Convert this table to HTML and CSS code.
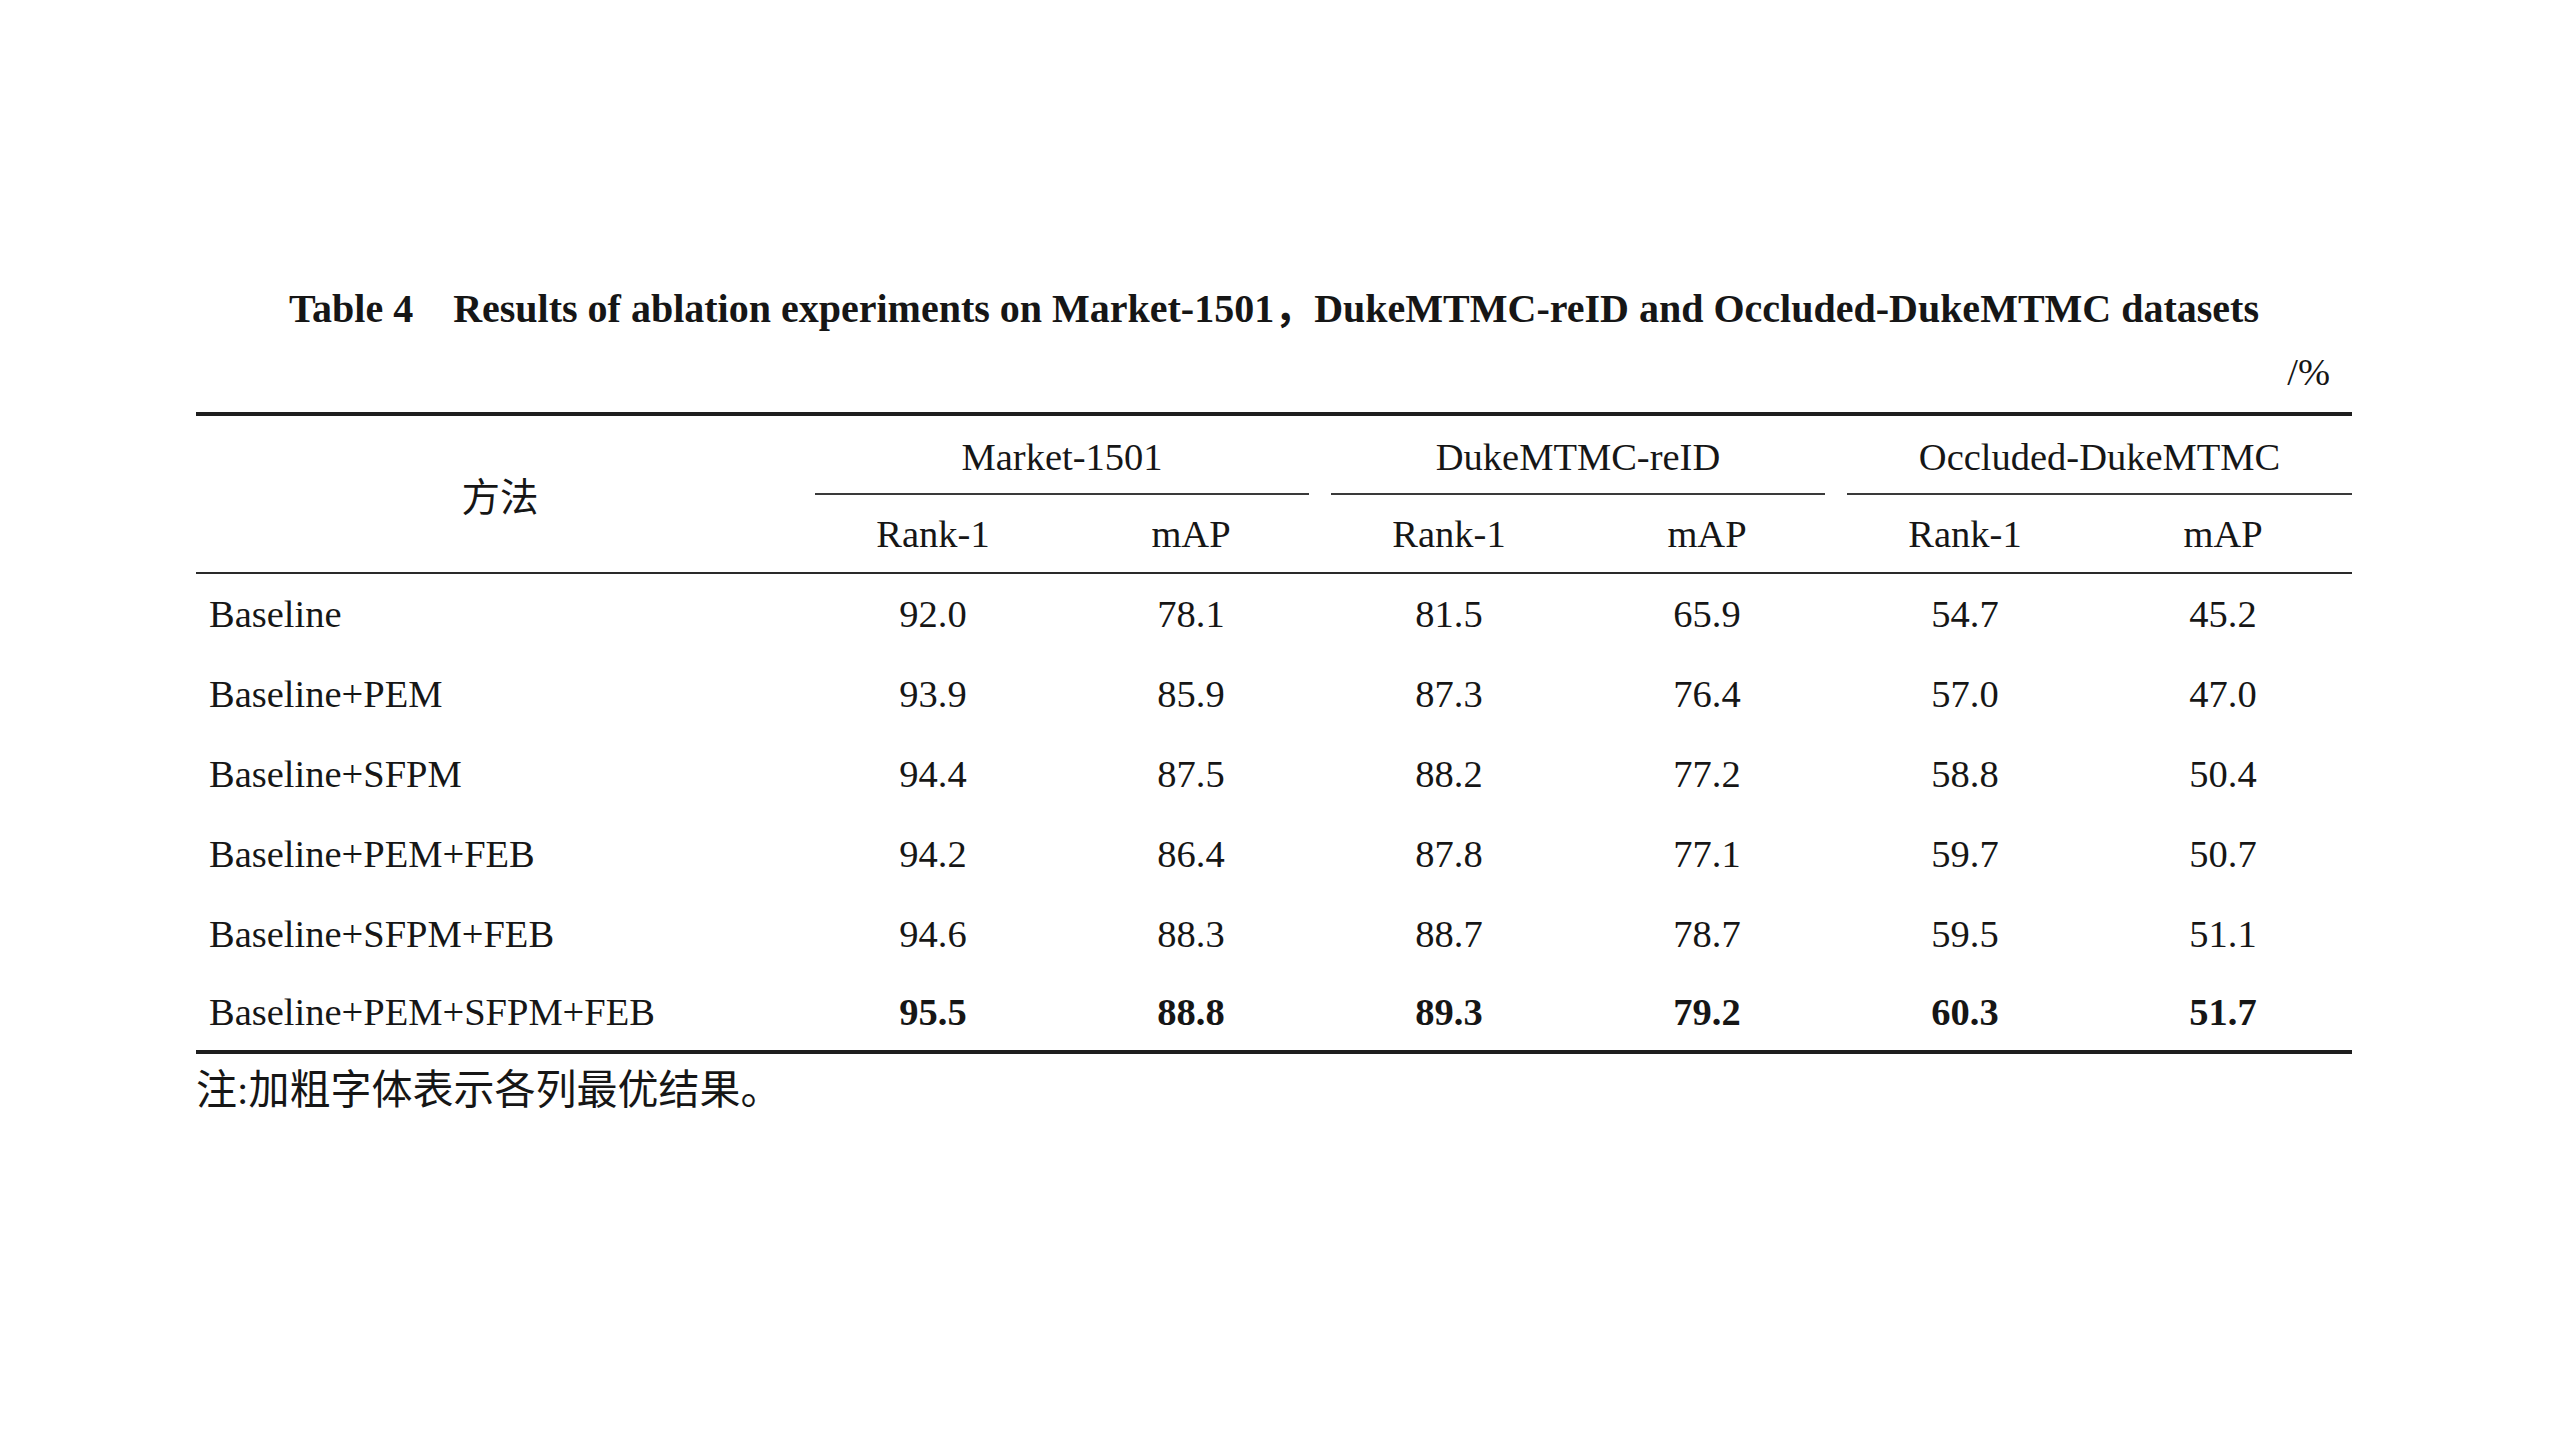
FILE: index.html
```html
<!DOCTYPE html>
<html lang="zh">
<head>
<meta charset="utf-8">
<title>Table 4</title>
<link rel="stylesheet" href="styles.css">
</head>
<body>
<div class="page">
  <h1 class="caption"><span class="label">Table 4</span>Results of ablation experiments on Market-1501<span class="cjk">，</span>DukeMTMC-reID and Occluded-DukeMTMC datasets</h1>
  <div class="unit">/%</div>
  <table class="results">
    <colgroup>
      <col class="c-method">
      <col class="c-val"><col class="c-val"><col class="c-val"><col class="c-val"><col class="c-val"><col class="c-val">
    </colgroup>
    <thead>
      <tr class="r1">
        <th rowspan="2" class="method-head cjk">方法</th>
        <th colspan="2" class="grp-cell"><div class="grp">Market-1501</div></th>
        <th colspan="2" class="grp-cell"><div class="grp">DukeMTMC-reID</div></th>
        <th colspan="2" class="grp-cell last"><div class="grp">Occluded-DukeMTMC</div></th>
      </tr>
      <tr class="r2">
        <th>Rank-1</th><th>mAP</th>
        <th>Rank-1</th><th>mAP</th>
        <th>Rank-1</th><th>mAP</th>
      </tr>
    </thead>
    <tbody>
      <tr><td class="method">Baseline</td><td>92.0</td><td>78.1</td><td>81.5</td><td>65.9</td><td>54.7</td><td>45.2</td></tr>
      <tr><td class="method">Baseline+PEM</td><td>93.9</td><td>85.9</td><td>87.3</td><td>76.4</td><td>57.0</td><td>47.0</td></tr>
      <tr><td class="method">Baseline+SFPM</td><td>94.4</td><td>87.5</td><td>88.2</td><td>77.2</td><td>58.8</td><td>50.4</td></tr>
      <tr><td class="method">Baseline+PEM+FEB</td><td>94.2</td><td>86.4</td><td>87.8</td><td>77.1</td><td>59.7</td><td>50.7</td></tr>
      <tr><td class="method">Baseline+SFPM+FEB</td><td>94.6</td><td>88.3</td><td>88.7</td><td>78.7</td><td>59.5</td><td>51.1</td></tr>
      <tr class="best"><td class="method">Baseline+PEM+SFPM+FEB</td><td class="b">95.5</td><td class="b">88.8</td><td class="b">89.3</td><td class="b">79.2</td><td class="b">60.3</td><td class="b">51.7</td></tr>
    </tbody>
  </table>
  <p class="note cjk">注:加粗字体表示各列最优结果。</p>
</div>
</body>
</html>
```
FILE: styles.css
```css
html, body {
  margin: 0;
  padding: 0;
  background: #ffffff;
}

body {
  font-family: "Liberation Serif", "Times New Roman", "Noto Sans CJK SC", serif;
  color: #161616;
}

.page {
  width: 2156px;
  margin-left: 196px;
  padding-top: 283px;
}

.cjk {
  font-family: "Liberation Serif", "Noto Sans CJK SC", serif;
}

.caption {
  margin: 0;
  font-size: 40px;
  line-height: 44px;
  font-weight: bold;
  text-align: center;
  white-space: nowrap;
}

.caption .label {
  margin-right: 40px;
}

.caption .cjk {
  font-family: "Noto Sans CJK SC", sans-serif;
  font-weight: bold;
}

.unit {
  margin-top: 19px;
  padding-right: 22px;
  font-size: 38.5px;
  line-height: 44px;
  text-align: right;
}

.results {
  margin-top: 18px;
  width: 2156px;
  table-layout: fixed;
  border-collapse: separate;
  border-spacing: 0;
  border-top: 4px solid #1e1e1e;
  font-size: 38.5px;
}

.c-method { width: 608px; }
.c-val { width: 258px; }

.results th,
.results td {
  padding: 0;
  font-weight: normal;
  text-align: center;
  vertical-align: middle;
}

.r1 { height: 79px; }
.r2 { height: 79px; }

.grp-cell {
  padding: 0 11px !important;
  vertical-align: bottom !important;
}

.grp-cell.last {
  padding-right: 0 !important;
}

.grp {
  height: 79px;
  box-sizing: border-box;
  display: flex;
  align-items: center;
  justify-content: center;
  border-bottom: 2px solid #3a3a3a;
  padding-top: 4px;
}

.r2 th,
.method-head {
  border-bottom: 2px solid #2a2a2a;
}

.method-head {
  font-size: 38.5px;
}

.results tbody tr {
  height: 80px;
}

.results td.method {
  text-align: left;
  padding-left: 13px;
}

.results tbody tr:last-child td {
  border-bottom: 4px solid #1e1e1e;
}

.results td.b {
  font-weight: bold;
}

.note {
  margin: 11px 0 0 0;
  font-size: 41px;
  line-height: 50px;
}
```
